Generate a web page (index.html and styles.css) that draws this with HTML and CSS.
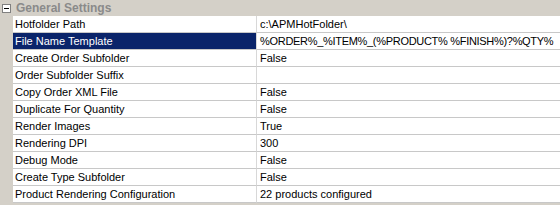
FILE: index.html
```html
<!DOCTYPE html>
<html>
<head>
<meta charset="utf-8">
<link rel="stylesheet" href="styles.css">
</head>
<body>
<div class="grid">
  <div class="category">
    <span class="toggle"><span class="minus"></span></span>
    <span class="cat-title">General Settings</span>
  </div>
  <div class="row"><div class="margin"></div><div class="name">Hotfolder Path</div><div class="value">c:\APMHotFolder\</div></div>
  <div class="row selected"><div class="margin"></div><div class="name">File Name Template</div><div class="value tight">%ORDER%_%ITEM%_(%PRODUCT% %FINISH%)?%QTY%</div></div>
  <div class="row"><div class="margin"></div><div class="name">Create Order Subfolder</div><div class="value">False</div></div>
  <div class="row"><div class="margin"></div><div class="name">Order Subfolder Suffix</div><div class="value"></div></div>
  <div class="row"><div class="margin"></div><div class="name">Copy Order XML File</div><div class="value">False</div></div>
  <div class="row"><div class="margin"></div><div class="name">Duplicate For Quantity</div><div class="value">False</div></div>
  <div class="row"><div class="margin"></div><div class="name">Render Images</div><div class="value">True</div></div>
  <div class="row"><div class="margin"></div><div class="name">Rendering DPI</div><div class="value">300</div></div>
  <div class="row"><div class="margin"></div><div class="name">Debug Mode</div><div class="value">False</div></div>
  <div class="row"><div class="margin"></div><div class="name">Create Type Subfolder</div><div class="value">False</div></div>
  <div class="row"><div class="margin"></div><div class="name">Product Rendering Configuration</div><div class="value">22 products configured</div></div>
</div>
</body>
</html>
```
FILE: styles.css
```css
html, body {
  margin: 0;
  padding: 0;
  background: #ffffff;
}
.grid {
  width: 560px;
  height: 205px;
  background: #d4d0c8;
  font-family: "Liberation Sans", Arial, sans-serif;
  font-size: 11px;
  color: #000000;
  overflow: hidden;
}
.category {
  height: 16px;
  display: flex;
  align-items: center;
}
.toggle {
  width: 9px;
  height: 9px;
  margin-left: 2px;
  box-sizing: border-box;
  border: 1px solid #808080;
  background: #ffffff;
  display: flex;
  align-items: center;
  justify-content: center;
}
.minus {
  width: 5px;
  height: 1px;
  background: #000000;
}
.cat-title {
  margin-left: 5px;
  font-weight: bold;
  font-size: 12px;
  color: #8a8a8a;
}
.row {
  display: flex;
  height: 17px;
}
.margin {
  width: 13px;
  flex: none;
  background: #d4d0c8;
}
.name, .value {
  height: 16px;
  line-height: 16px;
  border-bottom: 1px solid #c8c8c8;
  background: #ffffff;
  white-space: nowrap;
  overflow: hidden;
}
.name {
  width: 241px;
  flex: none;
  padding-left: 2px;
  border-right: 1px solid #d8d8d8;
}
.value {
  flex: 1;
  padding-left: 3px;
}
.value.tight {
  letter-spacing: -0.3px;
}
.selected .name {
  background: #0a246a;
  color: #ffffff;
}
```
